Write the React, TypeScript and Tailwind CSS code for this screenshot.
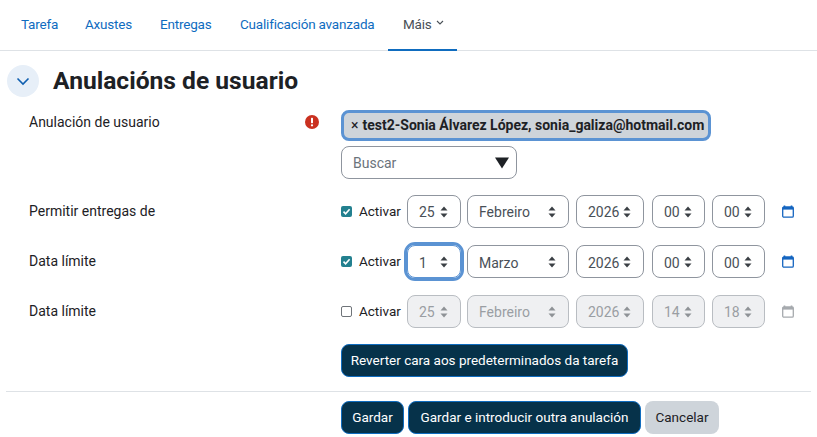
import React from "react";

const Arrows = ({ color }: { color: string }) => (
  <svg width="8" height="12" viewBox="0 0 8 12" className="shrink-0">
    <path d="M4 0.5 L7.5 4.5 H0.5 Z M0.5 7.5 H7.5 L4 11.5 Z" fill={color} />
  </svg>
);

const Sel = ({ v, w, disabled, focus, down }: { v: string; w: string; disabled?: boolean; focus?: boolean; down?: boolean }) => (
  <div
    className={`${w} h-[33px] rounded-[8px] border flex items-center justify-between pl-[11px] pr-[12px] text-[14px] ${
      disabled
        ? "border-[#b9bdc2] bg-[#eff0f2] text-[#9a9ea3]"
        : focus
        ? "border-[#5b93d3] bg-white text-[#495057] outline-[3px] outline-[#5b93d3]"
        : "border-[#8f959e] bg-white text-[#495057]"
    }`}
  >
    <span className={down ? "pt-[3px]" : "pt-[2px]"}>{v}</span>
    <Arrows color={disabled ? "#8e9296" : "#3a3f44"} />
  </div>
);

const Cal = ({ color }: { color: string }) => (
  <svg width="12" height="13" viewBox="0 0 12 13" className="ml-[17px] shrink-0">
    <path d="M2.5 0.5V2.5 M9.5 0.5V2.5" stroke={color} strokeWidth="1.6" />
    <rect x="0.7" y="2" width="10.6" height="10.2" rx="1.2" fill="none" stroke={color} strokeWidth="1.3" />
    <rect x="0.7" y="2" width="10.6" height="2.6" fill={color} />
  </svg>
);

const Check = ({ on }: { on: boolean }) =>
  on ? (
    <span className="w-[11px] h-[11px] rounded-[2px] bg-[#23808f] flex items-center justify-center shrink-0">
      <svg width="9" height="9" viewBox="0 0 9 9">
        <path d="M1.5 4.6 L3.6 6.8 L7.6 2.2" stroke="white" strokeWidth="1.6" fill="none" />
      </svg>
    </span>
  ) : (
    <span className="w-[11px] h-[11px] rounded-[2px] border border-[#6f7479] bg-white shrink-0" />
  );

const DateRow = ({
  label, on, vals, disabled, focus, calColor, mt, down,
}: {
  label: string; on: boolean; vals: string[]; disabled?: boolean; focus?: boolean; calColor: string; mt: string; down?: boolean;
}) => (
  <div className={`flex ${mt} h-[33px]`}>
    <div className="w-[341px] shrink-0 pl-[29px] pt-[6px] text-[14px] leading-[20px] text-[#1d2125]">{label}</div>
    <div className="flex items-center">
      <Check on={on} />
      <span className="ml-[7px] w-[48px] text-[13.5px] text-[#1d2125]">Activar</span>
      <Sel v={vals[0]} w="w-[54px]" disabled={disabled} focus={focus} down={down} />
      <div className="ml-[6px]"><Sel v={vals[1]} w="w-[102px]" disabled={disabled} down={down} /></div>
      <div className="ml-[7px]"><Sel v={vals[2]} w="w-[68px]" disabled={disabled} down={down} /></div>
      <div className="ml-[8px]"><Sel v={vals[3]} w="w-[53px]" disabled={disabled} down={down} /></div>
      <div className="ml-[7px]"><Sel v={vals[4]} w="w-[53px]" disabled={disabled} down={down} /></div>
      <Cal color={calColor} />
    </div>
  </div>
);

const Btn = ({ children, w, grey }: { children: React.ReactNode; w: string; grey?: boolean }) => (
  <div
    className={`${w} h-[33px] rounded-[8px] flex items-center justify-center whitespace-nowrap text-[13.5px] ${
      grey ? "bg-[#ced4da] text-[#1d2125]" : "bg-[#06324a] border border-[#0f6cbf] text-white"
    }`}
  >
    {children}
  </div>
);

const tabs = [
  ["Tarefa", "w-[64px]"],
  ["Axustes", "w-[75px]"],
  ["Entregas", "w-[80px]"],
  ["Cualificación avanzada", "w-[164px]"],
];

export default function App() {
  return (
    <div className="w-[817px] h-[437px] overflow-hidden bg-white font-['Roboto','Open_Sans',sans-serif]">
      <nav className="h-[51px] border-b border-[#dee2e6] flex pl-[5px] text-[13.5px] tracking-[-0.2px]">
        {tabs.map(([t, w]) => (
          <div key={t} className={`${w} shrink-0 pl-[16px] pt-[14px] text-[#0f6cbf] leading-[20px] whitespace-nowrap`}>{t}</div>
        ))}
        <div className="w-[69px] h-[51px] border-b-2 border-[#0f6cbf] pl-[15px] pt-[14px] leading-[20px] text-[#495057] flex items-start gap-[4px]">
          <span>Máis</span>
          <svg width="8" height="6" viewBox="0 0 8 6" className="mt-[6px]">
            <path d="M1 1 L4 4 L7 1" stroke="#495057" strokeWidth="1.1" fill="none" />
          </svg>
        </div>
      </nav>

      <div className="flex items-center pl-[7px] mt-[14px] h-[32px]">
        <div className="w-[32px] h-[32px] rounded-full bg-[#e7eff8] flex items-center justify-center">
          <svg width="14" height="9" viewBox="0 0 14 9">
            <path d="M1.5 1.5 L7 7 L12.5 1.5" stroke="#0f5fb0" strokeWidth="1.6" fill="none" />
          </svg>
        </div>
        <h2 className="ml-[14px] pt-[1px] text-[24.6px] font-bold text-[#1d2125] whitespace-nowrap">Anulacións de usuario</h2>
      </div>

      <div className="flex mt-[13px]">
        <div className="w-[305px] pl-[29px] pt-[2px] text-[14px] leading-[20px] text-[#1d2125] shrink-0">Anulación de usuario</div>
        <div className="w-[36px] pt-[5px] shrink-0">
          <svg width="14" height="14" viewBox="0 0 14 14">
            <circle cx="7" cy="7" r="7" fill="#ca3120" />
            <rect x="6" y="2.8" width="2" height="5.4" rx="0.6" fill="white" />
            <circle cx="7" cy="10.3" r="1.15" fill="white" />
          </svg>
        </div>
        <div>
          <div className="w-[370px] h-[31px] rounded-[8px] border-[3px] border-[#5b93d3] bg-[#ced4da] flex items-center pl-[7px] whitespace-nowrap text-[14px] font-bold text-[#1d2125]">
            <span className="font-normal mr-[4px]">×</span>test2-Sonia Álvarez López, sonia_galiza@hotmail.com
          </div>
          <div className="mt-[5px] w-[176px] h-[33px] rounded-[8px] border border-[#8f959e] flex items-center justify-between pl-[11px] pr-[7px]">
            <span className="pt-[2px] text-[14px] text-[#6a737b]">Buscar</span>
            <svg width="14" height="12" viewBox="0 0 14 12"><path d="M0 0.5 H14 L7 11.5 Z" fill="#1d2125" /></svg>
          </div>
        </div>
      </div>

      <DateRow mt="mt-[16px]" label="Permitir entregas de" on vals={["25", "Febreiro", "2026", "00", "00"]} calColor="#1565c0" />
      <DateRow mt="mt-[17px]" label="Data límite" on vals={["1", "Marzo", "2026", "00", "00"]} focus down calColor="#1565c0" />
      <DateRow mt="mt-[17px]" label="Data límite" on={false} vals={["25", "Febreiro", "2026", "14", "18"]} disabled calColor="#a6aaae" />

      <div className="mt-[16px] ml-[341px]">
        <Btn w="w-[287px]">Reverter cara aos predeterminados da tarefa</Btn>
      </div>

      <div className="mt-[14px] mx-[6px] border-t border-[#dee2e6]" />

      <div className="mt-[9px] ml-[341px] flex gap-[4px]">
        <Btn w="w-[63px]">Gardar</Btn>
        <Btn w="w-[233px]">Gardar e introducir outra anulación</Btn>
        <Btn w="w-[74px]" grey>Cancelar</Btn>
      </div>
    </div>
  );
}
